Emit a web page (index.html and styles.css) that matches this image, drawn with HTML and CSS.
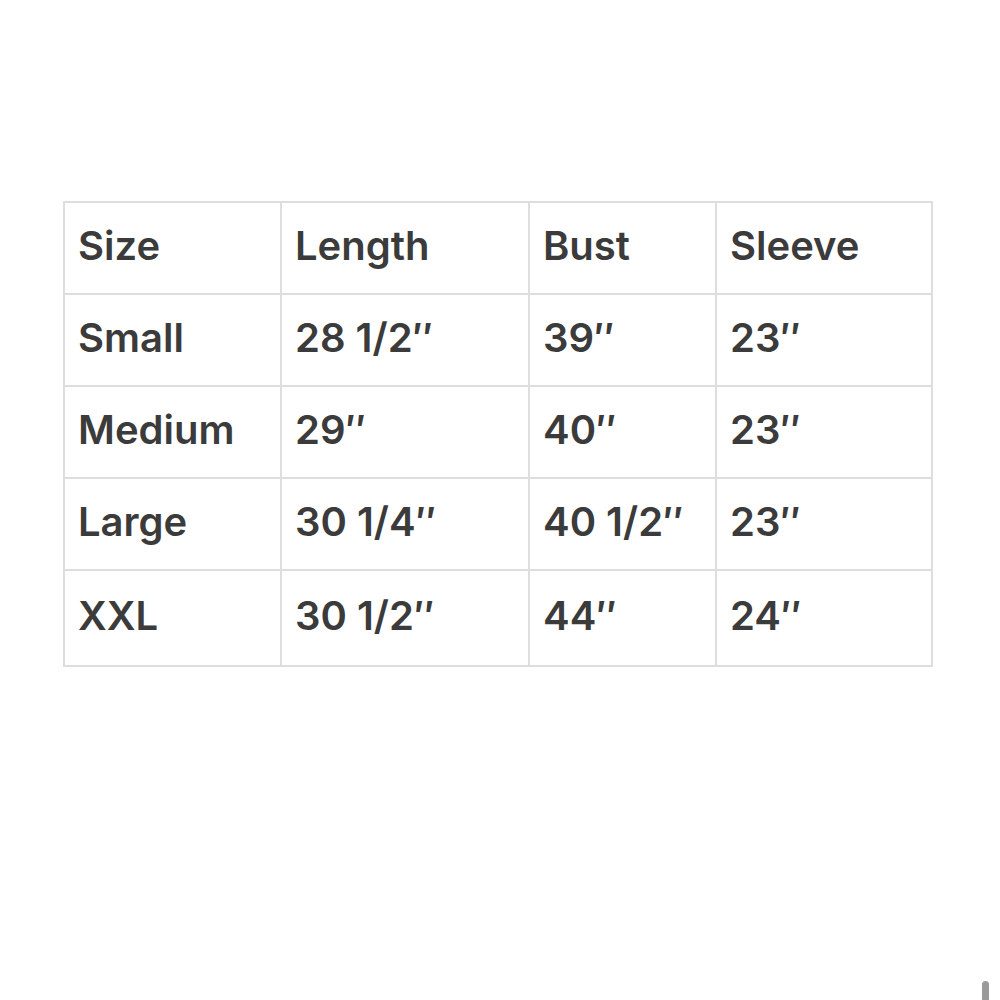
FILE: index.html
```html
<!DOCTYPE html>
<html>
<head>
<meta charset="utf-8">
<link rel="stylesheet" href="styles.css">
</head>
<body>
<main class="page">
  <table class="sizes">
    <colgroup>
      <col class="c1"><col class="c2"><col class="c3"><col class="c4">
    </colgroup>
    <tr><td>Size</td><td>Length</td><td>Bust</td><td>Sleeve</td></tr>
    <tr><td>Small</td><td>28 1/2″</td><td>39″</td><td>23″</td></tr>
    <tr><td>Medium</td><td>29″</td><td>40″</td><td>23″</td></tr>
    <tr><td>Large</td><td>30 1/4″</td><td>40 1/2″</td><td>23″</td></tr>
    <tr class="last"><td>XXL</td><td>30 1/2″</td><td>44″</td><td>24″</td></tr>
  </table>
</main>
<div class="scroll"></div>
</body>
</html>
```
FILE: styles.css
```css
html, body { margin: 0; padding: 0; background: #fff; }
body { overflow: hidden; height: 1000px; }
.page { padding: 201px 0 0 63px; }
.sizes {
  border-collapse: collapse;
  table-layout: fixed;
  width: 868px;
  font-family: Inter, "Liberation Sans", sans-serif;
  font-weight: 600;
  font-size: 40px;
  color: #3b3b3b;
}
.c1 { width: 217px; }
.c2 { width: 248px; }
.c3 { width: 187px; }
.c4 { width: 216px; }
.sizes td {
  border: 2px solid #dedede;
  height: 92px;
  padding: 0 0 6px 13px;
  box-sizing: border-box;
  vertical-align: middle;
  white-space: nowrap;
  letter-spacing: 0;
}
.sizes tr.last td { height: 96px; }
.scroll {
  position: absolute;
  left: 982px;
  top: 981px;
  width: 7px;
  height: 30px;
  border-radius: 4px;
  background: #9a9a9a;
}
```
